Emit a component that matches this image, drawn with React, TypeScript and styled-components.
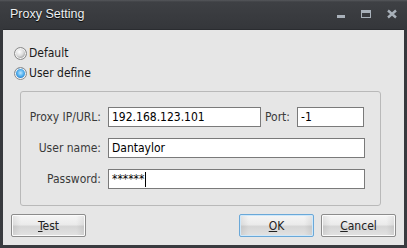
import React from "react";
import styled, { createGlobalStyle } from "styled-components";

const GlobalStyle = createGlobalStyle`
  html, body { margin: 0; padding: 0; background: #36383c; }
  body { font-family: "DejaVu Sans Condensed", "DejaVu Sans", sans-serif; font-stretch: condensed; font-size: 11px; }
`;

const Window = styled.div`
  width: 407px;
  height: 248px;
  box-sizing: border-box;
  display: flex;
  flex-direction: column;
  padding: 0 3px 3px;
  background: linear-gradient(#55575b 0, #3e4044 2px, #35373b 28px, #393b3f 100%);
`;

const TitleBar = styled.div`
  height: 29px;
  display: flex;
  align-items: center;
  padding: 0 7px 2px 7px;
  box-sizing: border-box;
`;

const Title = styled.div`
  flex: 1;
  color: #eef0f2;
  font-family: "Liberation Sans", Arial, sans-serif;
  font-stretch: normal;
  font-size: 12.5px;
  text-shadow: 0 1px 1px #000;
`;

const Controls = styled.div`
  display: flex;
  align-items: center;
  gap: 16px;
`;

const Body = styled.div`
  flex: 1;
  background: #e6e6e6;
  border-top: 1px solid #2a2c30;
  padding: 13px 8px 8px 11px;
  display: flex;
  flex-direction: column;
  color: #1a1a1a;
`;

const RadioRow = styled.label`
  display: flex;
  align-items: center;
  height: 20px;
  gap: 2px;
  font-size: 12px;
`;

const RadioDot = styled.span<{ $on?: boolean }>`
  width: 11px;
  height: 11px;
  border-radius: 50%;
  border: 1px solid #8a8a8a;
  background: ${(p) =>
    p.$on
      ? "radial-gradient(circle at 50% 45%, #bfe6ff 0, #58b4f0 3px, #2e86d0 5px, #e8f2fa 5.5px)"
      : "radial-gradient(circle at 40% 35%, #ffffff 0, #dcdcdc 4px, #b0b0b0 6px)"};
  box-shadow: inset 0 0 0 1px #f4f4f4;
`;

const Group = styled.div`
  align-self: flex-start;
  margin: 8px 0 0 6px;
  width: 361px;
  height: 115px;
  box-sizing: border-box;
  border: 1px solid #b9b9b9;
  border-radius: 3px;
  padding: 15px 15px 0 0;
  display: flex;
  flex-direction: column;
  gap: 11px;
`;

const Row = styled.div`
  display: flex;
  align-items: center;
  height: 20px;
`;

const Label = styled.span<{ $w?: number }>`
  width: ${(p) => p.$w ?? 87}px;
  flex: none;
  text-align: right;
  color: #3a3a3a;
  padding-right: 7px;
  box-sizing: border-box;
  white-space: nowrap;
  font-size: 12px;
`;

const Input = styled.div<{ $w?: number }>`
  width: ${(p) => (p.$w ? `${p.$w}px` : "auto")};
  flex: ${(p) => (p.$w ? "none" : 1)};
  height: 20px;
  box-sizing: border-box;
  border: 1px solid #7a7a7a;
  background: #fff;
  padding: 2px 3px;
  color: #000;
  font-size: 12px;
  line-height: 15px;
  white-space: nowrap;
  display: flex;
  align-items: center;
`;

const Caret = styled.span`
  width: 1px;
  height: 15px;
  background: #000;
  margin-left: 1px;
`;

const ButtonRow = styled.div`
  margin-top: auto;
  display: flex;
  gap: 7px;
  margin-left: -3px;
`;

const Button = styled.button<{ $focus?: boolean }>`
  width: 75px;
  height: 23px;
  box-sizing: border-box;
  font-family: "DejaVu Sans Condensed", "DejaVu Sans", sans-serif;
  font-stretch: condensed;
  font-size: 12px;
  color: #222;
  border: 1px solid ${(p) => (p.$focus ? "#6aa8d8" : "#8c8c8c")};
  border-radius: 2px;
  background: linear-gradient(90deg, rgba(0,0,0,0.08) 0, rgba(0,0,0,0) 12%, rgba(0,0,0,0) 88%, rgba(0,0,0,0.08) 100%),
    linear-gradient(#f6f6f6 0, #ebebeb 45%, #d6d6d6 55%, #e2e2e2 100%);
  box-shadow: inset 0 0 0 1px ${(p) => (p.$focus ? "#cfe8fa" : "#fbfbfb")};
  padding: 0;
  u { text-decoration: underline; }
`;

const Spacer = styled.div`
  flex: 1;
`;

const App = () => {
  return (
    <>
      <GlobalStyle />
      <Window>
        <TitleBar>
          <Title>Proxy Setting</Title>
          <Controls>
            <svg width="8" height="10" viewBox="0 0 8 10">
              <rect x="0" y="6" width="8" height="3" fill="#a9b1ba" />
            </svg>
            <svg width="10" height="10" viewBox="0 0 10 10">
              <rect x="0.5" y="1.5" width="9" height="7" fill="none" stroke="#a9b1ba" />
              <rect x="0" y="1" width="10" height="3" fill="#a9b1ba" />
            </svg>
            <svg width="10" height="10" viewBox="0 0 10 10">
              <path d="M1 1.5 L9 8.5 M9 1.5 L1 8.5" stroke="#a9b1ba" strokeWidth="2.4" />
            </svg>
          </Controls>
        </TitleBar>
        <Body>
          <RadioRow>
            <RadioDot />
            Default
          </RadioRow>
          <RadioRow>
            <RadioDot $on />
            User define
          </RadioRow>
          <Group>
            <Row>
              <Label>Proxy IP/URL:</Label>
              <Input $w={153}>192.168.123.101</Input>
              <Label $w={36}>Port:</Label>
              <Input $w={67}>-1</Input>
            </Row>
            <Row>
              <Label>User name:</Label>
              <Input>Dantaylor</Input>
            </Row>
            <Row>
              <Label>Password:</Label>
              <Input>
                ******
                <Caret />
              </Input>
            </Row>
          </Group>
          <ButtonRow>
            <Button>
              <u>T</u>est
            </Button>
            <Spacer />
            <Button $focus>
              <u>O</u>K
            </Button>
            <Button>
              <u>C</u>ancel
            </Button>
          </ButtonRow>
        </Body>
      </Window>
    </>
  );
};

export default App;
